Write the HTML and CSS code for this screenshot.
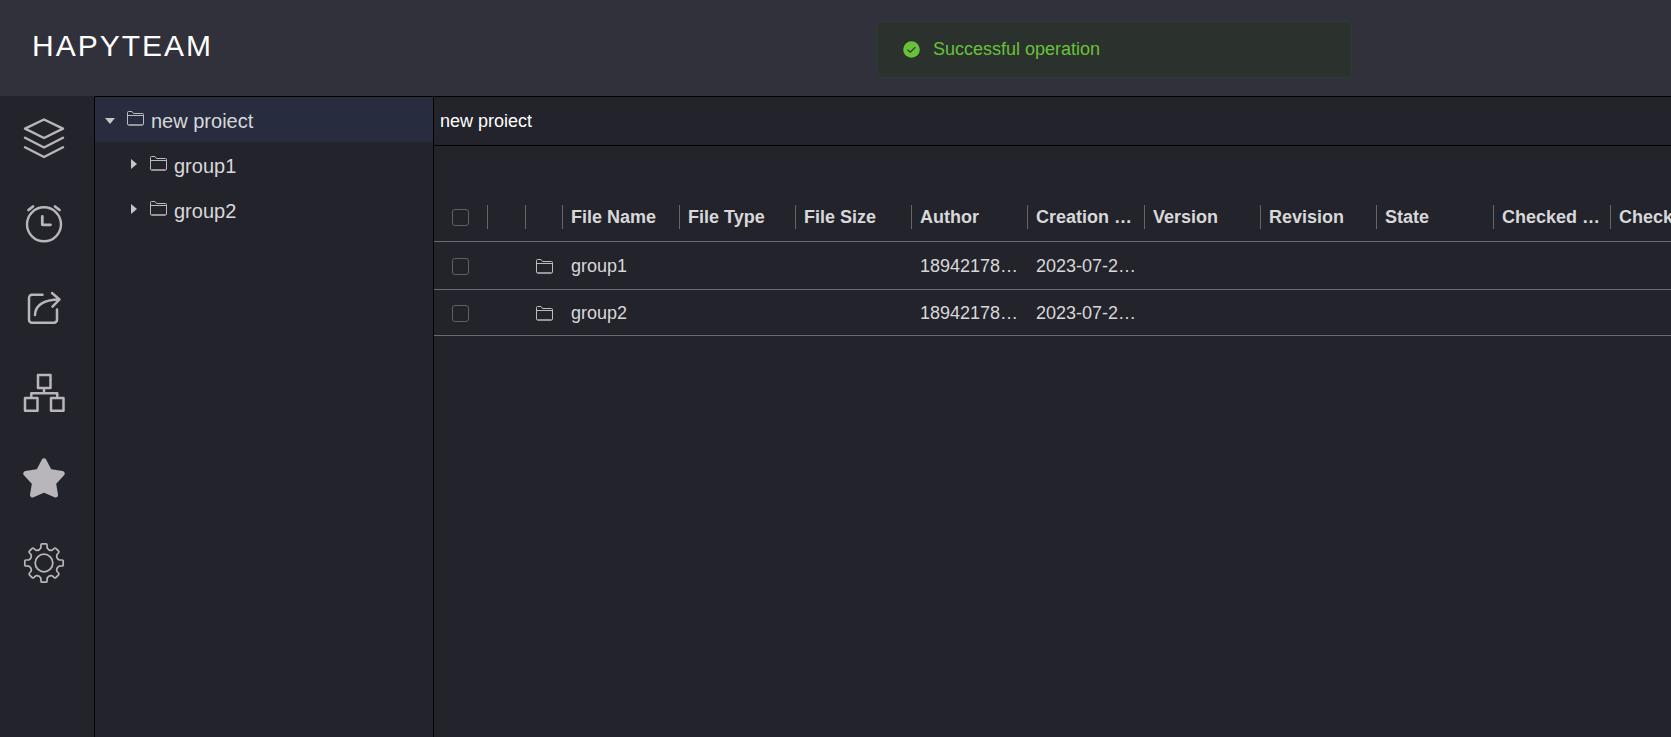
FILE: index.html
```html
<!DOCTYPE html>
<html lang="en">
<head>
<meta charset="utf-8">
<title>HAPYTEAM</title>
<link rel="stylesheet" href="styles.css">
</head>
<body>
<svg class="defs" aria-hidden="true">
  <symbol id="folder" viewBox="0 0 17 15">
    <path d="M.5 13V1.500q0-1 1-1h3.500l1.500 2h9q1 0 1 1V13q0 1-1 1h-14q-1 0-1-1zM.5 4.500h16M1.500 14h14" fill="none" stroke="currentColor"/>
  </symbol>
</svg>
<header class="topbar">
  <h1 class="logo">HAPYTEAM</h1>
  <div class="toast" role="alert">
    <svg class="toast-icon" viewBox="0 0 17 17"><circle cx="8.500" cy="8.500" r="8.300" fill="currentColor"/><path d="M4.500 8.800l2.800 2.300 5-5" fill="none" stroke="#2b322d" stroke-width="1.200"/></svg>
    <p>Successful operation</p>
  </div>
</header>
<div class="body">
  <nav class="rail">
    <button class="rail-btn" aria-label="Projects"><svg viewBox="0 0 42 42"><path d="M21 2.500L40 11.700 21 21 2 11.700zM2 20.700l19 9.800 19-9.800M2 30.200L21 40l19-9.800"/></svg></button>
    <button class="rail-btn" aria-label="Recent"><svg viewBox="0 0 42 42"><circle cx="21" cy="22.300" r="17"/><path d="M19.300 14.500v8.300h8.200M5.500 8L10 4.500M32 4.500L36.500 8" stroke-width="2.800"/></svg></button>
    <button class="rail-btn" aria-label="Share"><svg viewBox="0 0 42 42"><path d="M19.500 7.700H9a3 3 0 0 0-3 3v22a3 3 0 0 0 3 3h22a3 3 0 0 0 3-3V22.500M12 28c0-9 8-15.500 24.500-15.500M29 6l7.500 6.500L29.500 19.700" stroke-width="2.500"/></svg></button>
    <button class="rail-btn" aria-label="Structure"><svg viewBox="0 0 42 42"><path d="M15 3h12.500v13H15zM2 26h12.500v12.700H2zM28 26h12.500v12.700H28zM21 17v4M8.300 25v-3.700h26V25" stroke-width="2.500"/></svg></button>
    <button class="rail-btn" aria-label="Favourites"><svg viewBox="0 0 42 42"><path d="M21 3.800L26.500 14.500l12.700 2-8.700 9.500 2 12L21 33l-11.500 5 2-12L2.800 16.500l12.700-2z" fill="currentColor" stroke-width="5"/></svg></button>
    <button class="rail-btn" aria-label="Settings"><svg viewBox="0 0 42 42"><circle cx="21" cy="21" r="8.800" stroke-width="1.800"/><path d="M19 1.800h4q1 0 1 1L24.200 6Q26 9 29.300 8.100l2-1.700q.8-.7 1.500 0l2.800 2.800q.7.700 0 1.500l-1.700 2Q33 16 36 17.800l3.200.2q1 0 1 1v4q0 1-1 1l-3.200.2Q33 26 33.900 29.300l1.700 2q.7.800 0 1.500l-2.800 2.800q-.7.700-1.500 0l-2-1.700Q26 33 24.200 36l-.2 3.200q0 1-1 1h-4q-1 0-1-1l-.2-3.200Q16 33 12.700 33.900l-2 1.700q-.8.700-1.500 0l-2.800-2.800q-.7-.7 0-1.500l1.700-2Q9 26 6 24.200L2.800 24q-1 0-1-1v-4q0-1 1-1l3.200-.2Q9 16 8.100 12.700l-1.700-2q-.7-.8 0-1.500l2.800-2.800q.7-.7 1.500 0l2 1.700Q16 9 17.800 6l.2-3.200q0-1 1-1z" stroke-width="1.700"/></svg></button>
  </nav>
  <aside class="tree" role="tree">
    <div class="node node-root" role="treeitem" aria-selected="true" aria-expanded="true">
      <svg class="caret" viewBox="0 0 10 10"><path d="M0 2h10L5 8z" fill="currentColor"/></svg>
      <svg class="folder"><use href="#folder"/></svg>
      <span>new proiect</span>
    </div>
    <div class="node node-child" role="treeitem" aria-selected="false">
      <svg class="caret" viewBox="0 0 10 10"><path d="M3 0v10l6-5z" fill="currentColor"/></svg>
      <svg class="folder"><use href="#folder"/></svg>
      <span>group1</span>
    </div>
    <div class="node node-child" role="treeitem" aria-selected="false">
      <svg class="caret" viewBox="0 0 10 10"><path d="M3 0v10l6-5z" fill="currentColor"/></svg>
      <svg class="folder"><use href="#folder"/></svg>
      <span>group2</span>
    </div>
  </aside>
  <main class="content">
    <h2 class="path">new proiect</h2>
    <div class="table-area">
      <table class="files">
        <colgroup>
          <col class="c-check"><col class="c-icon"><col class="c-icon-last">
          <col class="c-wide"><col class="c-text"><col class="c-text"><col class="c-text">
          <col class="c-wide"><col class="c-text"><col class="c-text"><col class="c-wide">
          <col class="c-wide"><col class="c-wide">
        </colgroup>
        <thead>
          <tr>
            <th class="check"><div class="head"><input type="checkbox" aria-label="Select all"></div></th>
            <th><div class="head"></div></th>
            <th><div class="head"></div></th>
            <th><div class="head">File Name</div></th>
            <th><div class="head">File Type</div></th>
            <th><div class="head">File Size</div></th>
            <th><div class="head">Author</div></th>
            <th><div class="head">Creation …</div></th>
            <th><div class="head">Version</div></th>
            <th><div class="head">Revision</div></th>
            <th><div class="head">State</div></th>
            <th><div class="head">Checked …</div></th>
            <th><div class="head">Checked …</div></th>
          </tr>
        </thead>
        <tbody>
          <tr>
            <td class="check"><input type="checkbox" aria-label="Select group1"></td>
            <td></td>
            <td class="type"><svg class="folder"><use href="#folder"/></svg></td>
            <td>group1</td><td></td><td></td>
            <td>18942178…</td><td>2023-07-2…</td>
            <td></td><td></td><td></td><td></td><td></td>
          </tr>
          <tr>
            <td class="check"><input type="checkbox" aria-label="Select group2"></td>
            <td></td>
            <td class="type"><svg class="folder"><use href="#folder"/></svg></td>
            <td>group2</td><td></td><td></td>
            <td>18942178…</td><td>2023-07-2…</td>
            <td></td><td></td><td></td><td></td><td></td>
          </tr>
        </tbody>
      </table>
    </div>
  </main>
</div>
</body>
</html>
```
FILE: styles.css
```css
* {
  box-sizing: border-box;
}

body {
  margin: 0;
  min-height: 100vh;
  display: flex;
  flex-direction: column;
  overflow: hidden;
  background: #23232c;
  color: #d8d8d8;
  font-family: "Liberation Sans", Arial, sans-serif;
  font-size: 18px;
}

.defs {
  position: absolute;
  width: 0;
  height: 0;
}

.topbar {
  position: relative;
  height: 96px;
  padding: 0 32px;
  display: flex;
  align-items: center;
  background: #31313b;
}

.logo {
  margin: 0 0 4px;
  color: #fff;
  font-size: 30px;
  font-weight: 400;
  letter-spacing: 2px;
}

.toast {
  position: absolute;
  top: 21px;
  left: 877px;
  width: 475px;
  height: 57px;
  padding: 0 25px;
  display: flex;
  align-items: center;
  gap: 13px;
  border: 1px solid #2c3f2e;
  border-radius: 5px;
  background: #2b322d;
  color: #67c23a;
}

.toast p {
  margin: 0;
}

.toast-icon {
  width: 17px;
  height: 17px;
}

.body {
  flex: 1;
  display: flex;
}

.rail {
  width: 94px;
  padding-right: 6px;
  flex: none;
}

.rail-btn {
  display: flex;
  justify-content: center;
  width: 100%;
  height: 85px;
  padding: 21px 0;
  border: 0;
  background: none;
  color: #b8b6bb;
}

.rail-btn svg {
  width: 42px;
  height: 42px;
  fill: none;
  stroke: currentColor;
  stroke-width: 2.4px;
  stroke-linecap: round;
  stroke-linejoin: round;
}

.tree {
  width: 340px;
  flex: none;
  border: 1px solid #000;
  border-bottom: 0;
}

.node {
  display: flex;
  align-items: center;
  height: 45px;
  padding: 4px 10px 0;
  font-size: 20px;
}

.node-root {
  background: #272c3e;
}

.node-child {
  padding-left: 33px;
}

.caret {
  width: 10px;
  height: 10px;
  margin: 0 12px 2px 0;
  color: #c4c6cc;
}

.node-child .caret {
  margin-bottom: 6px;
}

.folder {
  display: block;
  width: 17px;
  height: 15px;
  color: #bcbcc0;
}

.node .folder {
  margin: 0 7px 6px 0;
}

.content {
  flex: 1;
  min-width: 0;
  overflow: hidden;
  border-top: 1px solid #000;
}

.path {
  height: 49px;
  margin: 0;
  padding: 0 6px;
  display: flex;
  align-items: center;
  border-bottom: 1px solid #000;
  color: #fff;
  font-size: 18px;
  font-weight: 400;
}

.table-area {
  padding-top: 47px;
}

.files {
  width: 1290px;
  min-width: 100%;
  table-layout: fixed;
  border-collapse: separate;
  border-spacing: 0;
}

.c-check { width: 54px; }
.c-icon { width: 38px; }
.c-icon-last { width: 37px; }
.c-text { width: 116px; }
.c-wide { width: 117px; }

.files th,
.files td {
  padding: 0;
  border-bottom: 1px solid #6a6a70;
  text-align: left;
  white-space: nowrap;
  overflow: hidden;
}

.files th {
  height: 49px;
}

.files td {
  height: 48px;
  padding: 2px 0 0 8px;
}

.files tr:last-child td {
  height: 46px;
}

.head {
  display: flex;
  align-items: center;
  height: 24px;
  padding-left: 8px;
  border-right: 1px solid #66666a;
}

.check .head {
  padding-left: 18px;
}

.files td.check {
  padding-left: 18px;
}

.files td.type {
  padding-left: 10px;
}

.check input {
  appearance: none;
  display: block;
  width: 17px;
  height: 17px;
  margin: 0;
  border: 1px solid #606062;
  border-radius: 3px;
}
```
